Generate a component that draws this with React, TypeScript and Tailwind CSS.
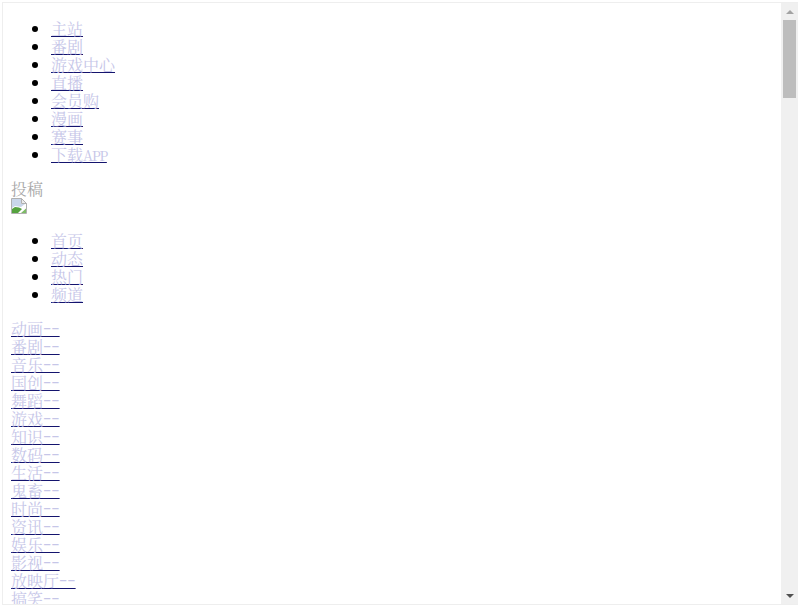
import React from 'react';

const topNav = ['主站', '番剧', '游戏中心', '直播', '会员购', '漫画', '赛事', '下载APP'];
const subNav = ['首页', '动态', '热门', '频道'];
const channels = [
	'动画--',
	'番剧--',
	'音乐--',
	'国创--',
	'舞蹈--',
	'游戏--',
	'知识--',
	'数码--',
	'生活--',
	'鬼畜--',
	'时尚--',
	'资讯--',
	'娱乐--',
	'影视--',
	'放映厅--',
	'搞笑--',
];

// latin runs are half width in the reference, 8px per char
const LinkText: React.FC<{ text: string }> = ({ text }) => (
	<a
		href="#"
		className="text-[#c6c6e8] underline decoration-[#14146e] [text-underline-offset:1px]"
	>
		{text.split(/(APP|-+)/).map((part, index) => {
			if (index % 2 === 0) return part;
			return part === 'APP' ? (
				<span key={index} className="text-[14px] leading-[0] tracking-[-1.3px]">
					{part}
				</span>
			) : (
				<span key={index} className="text-[24px] leading-[0]">
					{part}
				</span>
			);
		})}
	</a>
);

const NavList: React.FC<{ items: string[] }> = ({ items }) => (
	<ul className="my-4 list-disc pl-10 marker:text-black">
		{items.map((item) => (
			<li key={item} className="h-[18px]">
				<LinkText text={item} />
			</li>
		))}
	</ul>
);

const BrokenImage = () => (
	<div className="h-[18px]">
		<svg width="16" height="16" viewBox="0 0 16 16" className="block">
			<path d="M0.5 0.5H10.5L15.5 5.5V15.5H0.5Z" fill="#ffffff" stroke="#b0b0b0" />
			<path d="M10.5 0.5V5.5H15.5Z" fill="#ececec" stroke="#b0b0b0" />
			<path d="M1 1H10V6H14L10 9L4 8L1 10Z" fill="#c9d6ea" />
			<path d="M1 15V11L4 9L8 9.5L11 11L7 15Z" fill="#55a23f" />
			<path d="M10 15L15 10.5V15Z" fill="#7dbb66" />
		</svg>
	</div>
);

const Scrollbar = () => (
	<div className="flex w-[17px] shrink-0 flex-col items-center bg-[#f0f0f0]">
		<div className="flex h-[17px] w-full items-center justify-center">
			<div className="h-0 w-0 border-x-[4px] border-b-[4px] border-x-transparent border-b-[#a3a3a3]" />
		</div>
		<div className="h-[78px] w-[13px] bg-[#bdbdbd]" />
		<div className="flex-1" />
		<div className="flex h-[17px] w-full items-center justify-center">
			<div className="h-0 w-0 border-x-[4px] border-t-[4px] border-x-transparent border-t-[#505050]" />
		</div>
	</div>
);

export default function App() {
	return (
		<div className="h-[607px] w-[798px] overflow-hidden bg-white pt-[2px] pl-[2px] font-['Noto_Serif_CJK_SC','Liberation_Serif','Noto_Sans_CJK_SC',serif] text-base leading-[18px] text-black">
			<div className="flex h-[603px] border-y border-l border-[#eeeeee]">
				<main className="min-w-0 flex-1 overflow-hidden px-2 pt-px">
					<NavList items={topNav} />
					<div className="h-[18px] text-[#a8a8a8]">投稿</div>
					<BrokenImage />
					<NavList items={subNav} />
					<div>
						{channels.map((channel) => (
							<div key={channel} className="h-[18px]">
								<LinkText text={channel} />
							</div>
						))}
					</div>
				</main>
				<Scrollbar />
			</div>
		</div>
	);
}
